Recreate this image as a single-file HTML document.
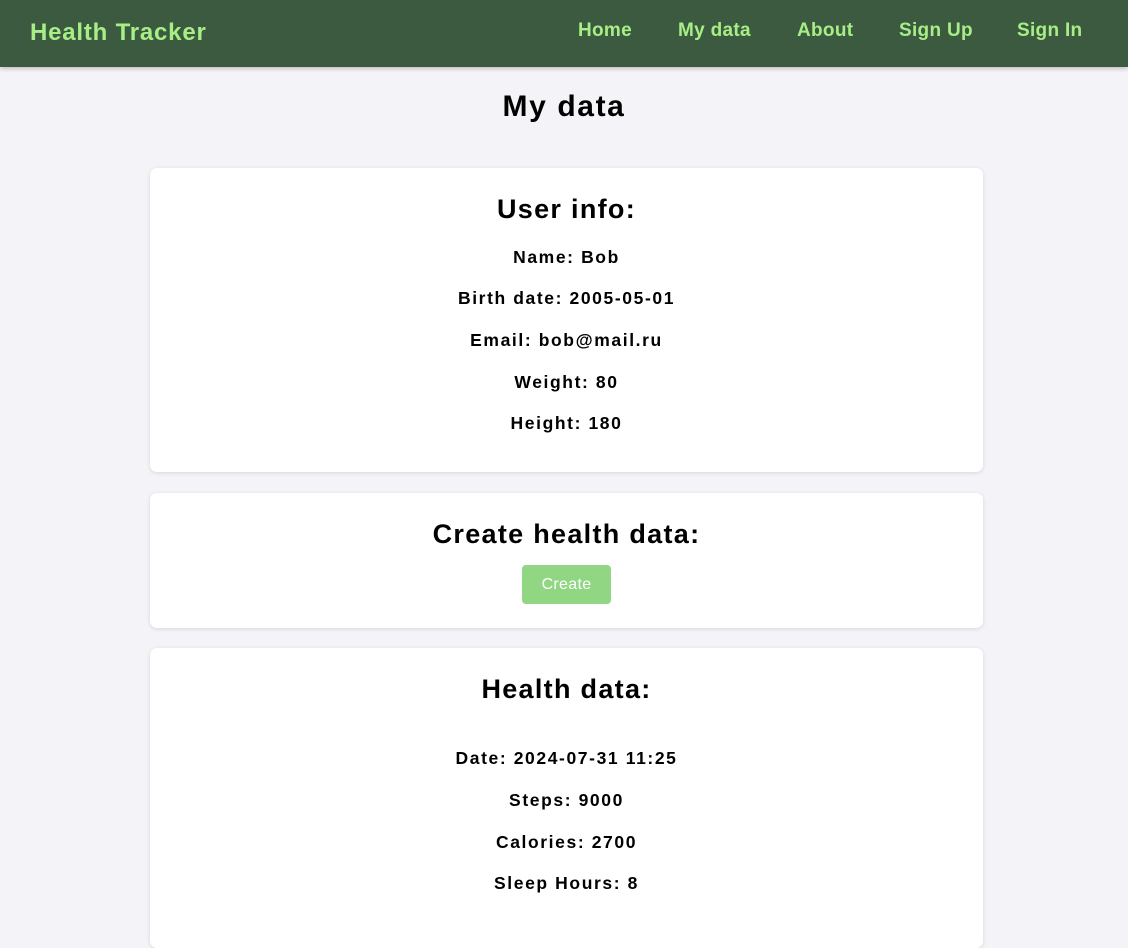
<!DOCTYPE html>
<html><head><style>
*{box-sizing:border-box;margin:0;padding:0}
body{width:1128px;height:915px;overflow:hidden;background:#f4f4f8;font-family:"Liberation Sans",sans-serif;color:#000}
.nav{height:67px;background:#3c5a3f;box-shadow:0 2px 4px rgba(0,0,0,.2);position:relative}
.logo{position:absolute;left:30px;top:19px;font-size:24px;font-weight:bold;color:#a6ee85;letter-spacing:0.8px}
.nav a{position:absolute;top:20px;font-size:19px;font-weight:bold;color:#a6ee85;text-decoration:none;letter-spacing:0.3px}
h1{text-align:center;font-size:30px;position:absolute;top:90px;width:100%;letter-spacing:1.6px}
.card{position:absolute;left:150px;width:833px;background:#fff;border-radius:7px;box-shadow:0 1px 4px rgba(0,0,0,.12);text-align:center}
.card h2{font-size:27px;position:absolute;width:100%;letter-spacing:1.3px}
.card p{font-size:17.5px;font-weight:bold;position:absolute;width:100%;letter-spacing:1.6px}
.btn{position:absolute;left:372px;top:72px;width:89px;height:39px;background:#90d683;border-radius:4px;color:#fff;font-size:16px;line-height:39px;letter-spacing:0.3px}
</style></head><body>
<div class="nav"><div class="logo">Health Tracker</div>
<a style="left:578px">Home</a><a style="left:678px">My data</a><a style="left:797px">About</a><a style="left:899px">Sign Up</a><a style="left:1017px">Sign In</a></div>
<h1>My data</h1>
<div class="card" style="top:168px;height:304px">
<h2 style="top:26px">User info:</h2>
<p style="top:79px">Name: Bob</p>
<p style="top:120px">Birth date: 2005-05-01</p>
<p style="top:162px">Email: bob@mail.ru</p>
<p style="top:204px">Weight: 80</p>
<p style="top:245px">Height: 180</p>
</div>
<div class="card" style="top:493px;height:135px">
<h2 style="top:26px">Create health data:</h2>
<div class="btn">Create</div>
</div>
<div class="card" style="top:648px;height:300px">
<h2 style="top:26px">Health data:</h2>
<p style="top:100px">Date: 2024-07-31 11:25</p>
<p style="top:142px">Steps: 9000</p>
<p style="top:184px">Calories: 2700</p>
<p style="top:225px">Sleep Hours: 8</p>
</div>
</body></html>
